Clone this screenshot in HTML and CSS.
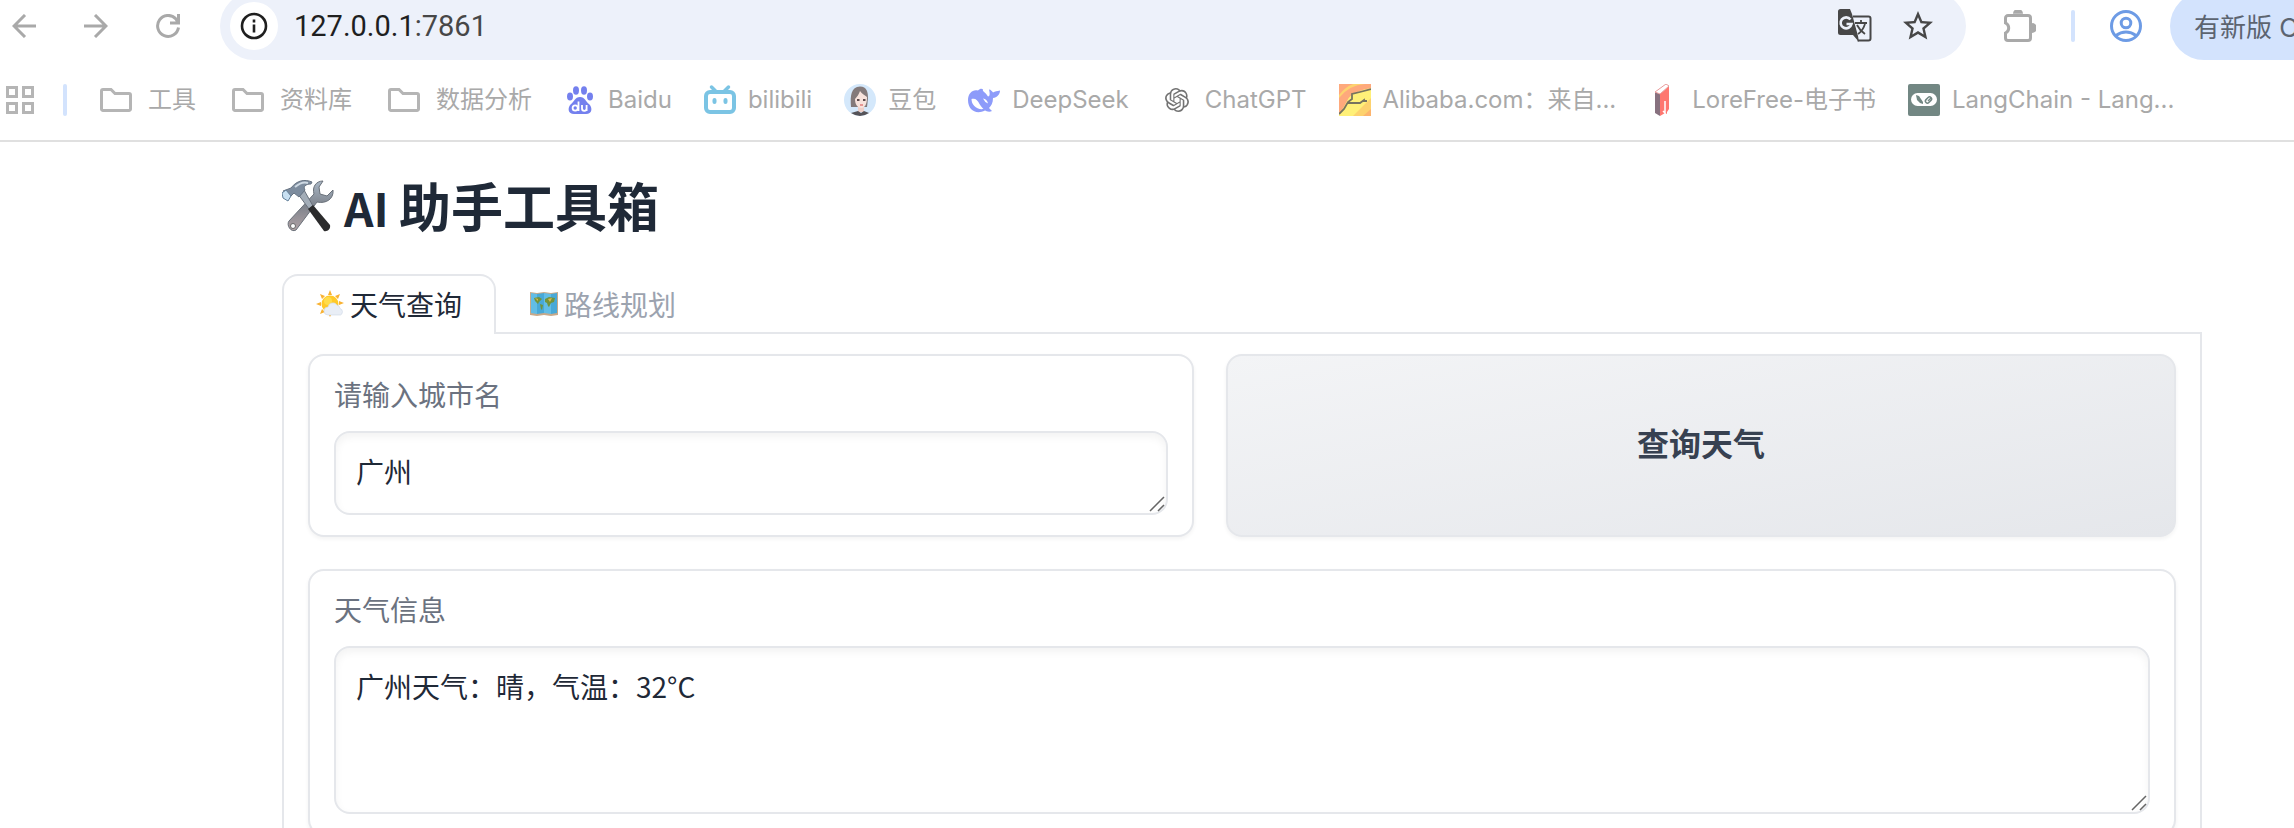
FILE: index.html
```html
<!DOCTYPE html>
<html lang="zh-CN">
<head>
<meta charset="utf-8">
<title>AI 助手工具箱</title>
<link rel="stylesheet" href="styles.css">
</head>
<body>
<header class="browser">
  <div class="toolbar">
    <nav class="nav-buttons" aria-label="导航">
      <button class="icon-btn" aria-label="后退"><svg width="24" height="24" viewBox="0 0 24 24" fill="none" stroke="#a9a9a9" stroke-width="3"><path d="M24 12H2M13 1L2 12l11 11"/></svg></button>
      <button class="icon-btn" aria-label="前进"><svg width="24" height="24" viewBox="0 0 24 24" fill="none" stroke="#a9a9a9" stroke-width="3"><path d="M0 12h22M11 1l11 11-11 11"/></svg></button>
      <button class="icon-btn" aria-label="重新加载"><svg width="24" height="24" viewBox="0 0 24 24" fill="none" stroke="#a9a9a9" stroke-width="3"><path d="M22.500 13.500A10.500 10.500 0 1 1 20 5l2 3.500M14 9h8.500V0"/></svg></button>
    </nav>
    <div class="omnibox">
      <button class="site-info" aria-label="网站信息"><svg width="28" height="28" viewBox="0 0 28 28" fill="none" stroke="#1f1f1f" stroke-width="2.600"><circle cx="14" cy="14" r="12"/><path d="M14 12.500v8M14 7.500v3"/></svg></button>
      <div class="url">127.0.0.1<span class="port">:7861</span></div>
      <button class="icon-btn" aria-label="翻译"><svg width="34" height="34" viewBox="0 0 34 34"><path d="M15 7.500h15.500a2 2 0 0 1 2 2v20a2 2 0 0 1-2 2H19.500" fill="none" stroke="#474747" stroke-width="2"/><path d="M2.500 0H12l2 5 6 22 1 6-6-7H2.500A2.500 2.500 0 0 1 0 23.500v-21A2.500 2.500 0 0 1 2.500 0z" fill="#474747"/><path d="M12.500 10.500A5.500 5.500 0 1 0 13.500 15H8.500" fill="none" stroke="#edf1fa" stroke-width="2.600"/><path d="M17 14h12M23 11v3M19 16c2 4 5 7 8 9M27 15c-2 6-4 8-7 10" fill="none" stroke="#474747" stroke-width="1.800"/></svg></button>
      <button class="icon-btn" aria-label="为此标签页添加书签"><svg width="36" height="36" viewBox="0 0 24 24" fill="#474747"><path d="M22 9.240l-7.190-.62L12 2 9.190 8.630 2 9.240l5.460 4.730L5.820 21 12 17.270 18.180 21l-1.630-7.030L22 9.240zM12 15.400l-3.760 2.270 1-4.280-3.320-2.880 4.380-.38L12 6.100l1.710 4.040 4.380.38-3.320 2.880 1 4.280L12 15.400z"/></svg></button>
    </div>
    <div class="actions">
      <button class="icon-btn" aria-label="扩展程序"><svg width="32" height="32" viewBox="0 0 32 32"><path d="M9 3.800a5 5 0 0 1 10 0zM28 13a5 5 0 0 1 0 10z" fill="#a9a9a9"/><path d="M4 5.500h20a2.500 2.500 0 0 1 2.500 2.500v20a2.500 2.500 0 0 1-2.500 2.500H4A2.500 2.500 0 0 1 1.500 28v-5a5.500 5.500 0 0 0 0-10V8A2.500 2.500 0 0 1 4 5.500z" fill="none" stroke="#a9a9a9" stroke-width="3"/></svg></button>
      <span class="divider"></span>
      <button class="icon-btn" aria-label="个人资料"><svg width="32" height="32" viewBox="0 0 32 32" fill="none" stroke="#6d9be5" stroke-width="3"><circle cx="16" cy="16" r="14.500"/><circle cx="16" cy="13" r="4.800"/><path d="M6 25.500c6-4.700 14-4.700 20 0"/></svg></button>
    </div>
    <button class="update">有新版 C</button>
  </div>
  <nav class="bookmarks" aria-label="书签">
    <button class="icon-btn" aria-label="应用"><svg width="28" height="28" viewBox="0 0 28 28" fill="none" stroke="#b5b5b5" stroke-width="3"><path d="M1.500 1.500h9v9h-9zM17.500 1.500h9v9h-9zM1.500 17.500h9v9h-9zM17.500 17.500h9v9h-9z"/></svg></button>
    <span class="divider"></span>
    <div class="links">
      <button class="bookmark"><svg width="40" height="32" viewBox="0 0 40 32" fill="none" stroke="#b5b5b5" stroke-width="3"><path d="M7 5.500h8l4 4h14a1.500 1.500 0 0 1 1.500 1.500v14a1.500 1.500 0 0 1-1.500 1.500H7A1.500 1.500 0 0 1 5.500 25V7A1.500 1.500 0 0 1 7 5.500z"/></svg>工具</button>
      <button class="bookmark"><svg width="40" height="32" viewBox="0 0 40 32" fill="none" stroke="#b5b5b5" stroke-width="3"><path d="M7 5.500h8l4 4h14a1.500 1.500 0 0 1 1.500 1.500v14a1.500 1.500 0 0 1-1.500 1.500H7A1.500 1.500 0 0 1 5.500 25V7A1.500 1.500 0 0 1 7 5.500z"/></svg>资料库</button>
      <button class="bookmark"><svg width="40" height="32" viewBox="0 0 40 32" fill="none" stroke="#b5b5b5" stroke-width="3"><path d="M7 5.500h8l4 4h14a1.500 1.500 0 0 1 1.500 1.500v14a1.500 1.500 0 0 1-1.500 1.500H7A1.500 1.500 0 0 1 5.500 25V7A1.500 1.500 0 0 1 7 5.500z"/></svg>数据分析</button>
      <a class="bookmark" href="#"><svg width="32" height="32" viewBox="0 0 32 32"><g fill="#7480ee"><ellipse cx="6" cy="12.500" rx="3" ry="4"/><ellipse cx="12" cy="6.500" rx="3" ry="4.200"/><ellipse cx="20" cy="6.500" rx="3" ry="4.200"/><ellipse cx="26" cy="12.500" rx="3" ry="4"/><path d="M16 13c5 0 6 5 9 7 4 4 3 10-3 10H10c-6 0-7-6-3-10 3-2 4-7 9-7z"/></g><g fill="none" stroke="#fff" stroke-width="1.800"><circle cx="11.200" cy="24" r="2.600"/><path d="M14.500 17.500V27M18 21v3.500q0 2.300 2.300 2.300t2.300-2.300V21V27"/></g></svg>Baidu</a>
      <a class="bookmark" href="#"><svg width="32" height="32" viewBox="0 0 32 32" fill="none" stroke="#7bc4e4" stroke-width="4" stroke-linecap="round"><rect x="2" y="8" width="28" height="20" rx="4"/><path d="M7.500 3l4 4M24.500 3l-4 4" stroke-width="3.500"/><path d="M10.500 16v2M21.500 16v2"/></svg>bilibili</a>
      <a class="bookmark" href="#"><svg width="32" height="32" viewBox="0 0 32 32"><circle cx="16" cy="16" r="16" fill="#d4e8fb"/><path d="M7 23C6 12 7 3 16 2.500c7 0 8 6 8 12L23 23z" fill="#83797a"/><path d="M14 22h6v6h-6z" fill="#eed0c9"/><path d="M11 15c2-2 4-5 5-8 2 3 5 4 7 6 0 7-2 11-5.500 11S11 21 11 15z" fill="#f7e2dc"/><path d="M7 29l7-2 3 2 3-2 5 2q-9 6-18 0z" fill="#555358"/><path d="M13 16h2.500M19 16h2.500" stroke="#5c4a4c" stroke-width="1.800"/><path d="M16 21h3" stroke="#e07c7c" stroke-width="1.500"/></svg>豆包</a>
      <a class="bookmark" href="#"><svg width="32" height="32" viewBox="0 0 32 32"><path d="M0 16C0 9 5 5 10 6.500c2-2 4-2 5-1-1 2 3 3 5 7 2 0 2-3 1-7 2 0 3 2 4 3 2-1.500 4-1 7-2 0 4-3 7-7 7.500 0 5-2 8-4 10l3 3c-3 1.500-6 0-7-.500C8 31 0 26 0 16z" fill="#8d9bfa"/><path d="M3.500 15c4-1 6 1 8 5 2 3 3 4 4 5-7 1-12-4-12-10zM15 14.500q4 .5 5 5-3.500-1.500-5-5z" fill="#fff"/></svg>DeepSeek</a>
      <a class="bookmark" href="#"><svg width="32" height="32" viewBox="0 0 32 32"><g transform="translate(4 4)" fill="#737373"><path d="M22.280 9.820a5.980 5.980 0 0 0-.52-4.910 6.050 6.050 0 0 0-6.510-2.900A6.070 6.070 0 0 0 4.980 4.180a5.980 5.980 0 0 0-4 2.900 6.050 6.050 0 0 0 .74 7.100 5.980 5.980 0 0 0 .51 4.910 6.050 6.050 0 0 0 6.520 2.900A5.980 5.980 0 0 0 13.260 24a6.060 6.060 0 0 0 5.770-4.210 5.990 5.990 0 0 0 4-2.900 6.060 6.060 0 0 0-.75-7.070zm-9.020 12.610a4.480 4.480 0 0 1-2.880-1.040l.14-.08 4.780-2.760a.79.79 0 0 0 .39-.68v-6.740l2.020 1.170.04.050v5.580a4.500 4.500 0 0 1-4.490 4.500zM3.600 18.300a4.470 4.470 0 0 1-.54-3.010l.14.090 4.780 2.760a.77.77 0 0 0 .78 0l5.840-3.370v2.330l-.03.060L9.740 19.950A4.500 4.500 0 0 1 3.600 18.300zM2.340 7.900a4.490 4.490 0 0 1 2.370-1.980v5.680a.77.77 0 0 0 .39.680l5.810 3.350-2.020 1.170h-.07l-4.830-2.790A4.500 4.500 0 0 1 2.340 7.870zm16.600 3.860L13.100 8.360l2.020-1.160h.07l4.830 2.790a4.490 4.490 0 0 1-.68 8.100v-5.680a.79.79 0 0 0-.4-.65zm2.010-3.030-.14-.09-4.770-2.780a.78.78 0 0 0-.79 0L9.410 9.230V6.900l.03-.06 4.830-2.790a4.500 4.500 0 0 1 6.680 4.660zM8.310 12.860 6.290 11.700l-.04-.06V6.070a4.500 4.500 0 0 1 7.380-3.450l-.14.080L8.700 5.460a.79.79 0 0 0-.39.680zm1.100-2.360L12 9l2.610 1.500v3L12.010 15l-2.600-1.500z"/></g></svg>ChatGPT</a>
      <a class="bookmark" href="#"><svg width="32" height="32" viewBox="0 0 32 32"><path d="M0 0h32v32H0z" fill="#fea97c"/><path d="M0 14Q10 1 26 0H14Q6 3 0 11z" fill="#fdd36f"/><path d="M0 30C8 20 8 12 16 9q8-4 16-5v28H0z" fill="#fff078"/><path d="M32 14v18H14z" fill="#fdd26e"/><path d="M32 25v7h-8z" fill="#fdb46d"/><path d="M0 30l5-5 4-7 4-3V10l8-2 11-3M8 19h13l4-3v1h3" fill="none" stroke="#77735f" stroke-width="1.800"/></svg>Alibaba.com：来自...</a>
      <a class="bookmark" href="#"><svg width="32" height="32" viewBox="0 0 32 32"><path d="M7 8l5 2v22l-5-3z" fill="#87717f"/><path d="M12 10l9-8v23l-2 3v2l-2-1-5 3z" fill="#fe7770"/><path d="M7 8L18 0l3 2-9 8z" fill="#fff" stroke="#e89b9b"/><path d="M17 17v12l-2-2" fill="none" stroke="#fff" stroke-width="1.500"/></svg>LoreFree-电子书</a>
      <a class="bookmark" href="#"><svg width="32" height="32" viewBox="0 0 32 32"><rect width="32" height="32" rx="2" fill="#728783"/><rect x="3" y="9" width="26" height="13" rx="6.500" fill="#fff"/><path d="M8 11l3 1 4 6v2l-3-1-3-3z" fill="#728783"/><g fill="none" stroke="#728783" stroke-width="1.500"><rect x="17" y="14" width="7" height="4" rx="2" transform="rotate(-45 20.500 16)"/><path d="M20 17l3-3"/></g></svg>LangChain - Lang...</a>
    </div>
  </nav>
</header>
<main class="page">
  <h1 class="title">
    <svg class="title-icon" width="52" height="52" viewBox="0 0 52 52" aria-hidden="true">
      <defs><linearGradient id="steel" x1="0" y1="0" x2="0" y2="1"><stop offset="0" stop-color="#a9b7c6"/><stop offset=".5" stop-color="#7e838c"/><stop offset="1" stop-color="#b1a2a5"/></linearGradient></defs>
      <path d="M41 1c-7 0-11 6-9 13L7 41c-3 4 2 12 7 9l21-28c9 2 17-3 16-12l-6 6-7-2-1-7z" fill="url(#steel)" stroke="#697079"/>
      <circle cx="11" cy="46" r="2.500" fill="#fff" stroke="#666"/>
      <path d="M16 14l6-4 9 16-4 3z" fill="#a3adb8" stroke="#69717c"/>
      <path d="M26 29l5-4 17 20c1 4-3 7-6 6z" fill="#2b2b2c"/>
      <path d="M9 8C15 0 23-1 30 2l-1 2c-6 0-8 3-6 6l-6 7-5-4-5 5-6-7z" fill="#7d8c9e" stroke="#677382"/>
      <path d="M0 13l4-3 5 6-3 5-5-3z" fill="#c8e0f2" stroke="#63809a"/>
      <path d="M13 7q7-6 13-4" fill="none" stroke="#ced9e3" stroke-width="2"/>
    </svg>
    <span class="title-text"><span class="latin">AI </span>助手工具箱</span>
  </h1>
  <div class="tabs" role="tablist">
    <button class="tab selected" role="tab" aria-selected="true">
      <svg width="28" height="28" viewBox="0 0 28 28" aria-hidden="true"><path d="M14 0l2 5h-4zM4 4l5 2-3 3zM24 4l-2 5-3-3zM0 14l5-2v4zM28 13l-5 2v-4zM4 24l2-5 3 3zM14 27l-2-4h4z" fill="#f9b233"/><circle cx="14" cy="14" r="8.500" fill="#ffc928"/><circle cx="12" cy="11" r="4" fill="#ffdc4a"/><path d="M12 25a4 4 0 0 1 0-8 5 5 0 0 1 9-2 4 4 0 0 1 3 3.500A3.500 3.500 0 0 1 24.500 25z" fill="#e9eef6" stroke="#ccd6e5" stroke-width=".6"/></svg>
      天气查询
    </button>
    <button class="tab" role="tab" aria-selected="false">
      <svg width="28" height="28" viewBox="0 0 28 28" aria-hidden="true"><path d="M0 2l7 1 7-1 7 1 7-1v23l-7 1-7-1-7 1-7-1z" fill="#c7a98a"/><path d="M1 3l6 1v20l-6-1zM14 3l7 1v20l-7-1z" fill="#62bde6"/><path d="M7 4l7-1v20l-7 1zM21 4l6-1v20l-6 1z" fill="#48a9d8"/><path d="M4 8l5-1 3 2-3 3-1 2-3-3zM10 14l3 1-1 5-1-1zM15 9l4-2 6 1-1 4-3 1-2 4-1-1-1-3-2-1z" fill="#71943d"/><path d="M5 8l3 1v2zM18 9l4-1-2 4z" fill="#dbb84f"/></svg>
      路线规划
    </button>
  </div>
  <section class="panel" role="tabpanel">
    <div class="query-row">
      <div class="block">
        <label class="label" for="city">请输入城市名</label>
        <div class="field">
          <textarea class="textbox" id="city" rows="1">广州</textarea>
          <svg class="grip" width="16" height="16" viewBox="0 0 16 16" fill="none" stroke="#666" stroke-width="1.500" aria-hidden="true"><path d="M1 15L15 1M9 15l6-6"/></svg>
        </div>
      </div>
      <button class="submit">查询天气</button>
    </div>
    <div class="block">
      <label class="label" for="weather">天气信息</label>
      <div class="field">
        <textarea class="textbox" id="weather" rows="3" readonly>广州天气：晴，气温：32°C</textarea>
        <svg class="grip" width="16" height="16" viewBox="0 0 16 16" fill="none" stroke="#666" stroke-width="1.500" aria-hidden="true"><path d="M1 15L15 1M9 15l6-6"/></svg>
      </div>
    </div>
  </section>
</main>
</body>
</html>
```

FILE: styles.css
```css
* { box-sizing: border-box; }

html { height: 100%; overflow: hidden; }

body {
  margin: 0;
  height: 100%;
  overflow: hidden;
  background: #fff;
  color: #1f2937;
  font-family: "Noto Sans CJK SC", sans-serif;
}

button, textarea { font: inherit; color: inherit; }
button { border: 0; padding: 0; background: none; cursor: pointer; }
svg { display: block; flex: none; }

/* Browser chrome */
.browser {
  border-bottom: 2px solid #e0e0e0;
  font-family: Inter, "Noto Sans CJK SC", sans-serif;
}

.toolbar {
  display: flex;
  align-items: center;
  height: 68px;
  margin-top: -8px;
  padding-left: 12px;
}

.icon-btn { display: flex; flex: none; }

.nav-buttons { display: flex; gap: 48px; margin-right: 40px; }

.omnibox {
  flex: 1;
  display: flex;
  align-items: center;
  gap: 28px;
  height: 68px;
  padding: 0 30px 0 10px;
  border-radius: 34px;
  background: #edf1fa;
}

.site-info {
  display: flex;
  align-items: center;
  justify-content: center;
  width: 48px;
  height: 48px;
  border-radius: 50%;
  background: #fff;
}

.url {
  flex: 1;
  margin-left: -12px;
  font-family: Roboto, sans-serif;
  font-size: 29px;
  line-height: 36px;
  color: #1f1f1f;
}

.port { color: #474747; }

.actions { display: flex; align-items: center; gap: 35px; margin: 0 28px 0 38px; }

.divider { flex: none; width: 4px; height: 32px; border-radius: 2px; background: #d3e3fd; }

.update {
  flex: none;
  width: 124px;
  height: 68px;
  padding: 0 0 2px 24px;
  border-radius: 34px 0 0 34px;
  background: #d3e3fd;
  color: #5c6470;
  font-size: 26px;
  text-align: left;
  white-space: nowrap;
  overflow: hidden;
}

.bookmarks { display: flex; align-items: center; height: 80px; padding-left: 6px; gap: 29px; }

.links { display: flex; gap: 32px; }

.bookmark {
  display: flex;
  align-items: center;
  gap: 12px;
  color: #a9a9a9;
  font-size: 24px;
  line-height: 32px;
  text-decoration: none;
  white-space: nowrap;
}

/* Application */
.page { padding: 30px 92px 0 282px; }

.title {
  display: flex;
  align-items: center;
  gap: 10px;
  height: 68px;
  margin: 0 0 34px;
  font-size: 52px;
  line-height: 68px;
  font-weight: 700;
}

.title-text { padding-bottom: 3px; }

.latin { font-size: 46px; line-height: 1; white-space: pre; }

.tabs { display: flex; border-bottom: 2px solid #e5e7eb; }

.tab {
  display: flex;
  align-items: center;
  gap: 6px;
  height: 60px;
  margin-bottom: -2px;
  padding: 0 32px 2px;
  border: 2px solid transparent;
  border-bottom: 0;
  border-radius: 16px 16px 0 0;
  color: #9ca3af;
  font-size: 28px;
}

.tab.selected { border-color: #e5e7eb; background: #fff; color: #1f2937; }

.panel {
  display: flex;
  flex-direction: column;
  gap: 32px;
  padding: 20px 24px;
  border: 2px solid #e5e7eb;
  border-top: 0;
}

.query-row { display: grid; grid-template-columns: 443fr 475fr; gap: 32px; }

.block {
  padding: 19px 24px 20px;
  border: 2px solid #e5e7eb;
  border-radius: 16px;
  background: #fff;
  box-shadow: 0 2px 4px rgba(0, 0, 0, 0.05);
}

.label {
  display: block;
  margin-bottom: 17px;
  color: #6b7280;
  font-size: 28px;
  line-height: 39px;
}

.field { position: relative; }

.textbox {
  display: block;
  width: 100%;
  padding: 17px 20px 21px;
  border: 2px solid #e5e7eb;
  border-radius: 16px;
  outline: 0;
  background: #fff;
  box-shadow: inset 0 4px 8px rgba(0, 0, 0, 0.05);
  font-size: 28px;
  line-height: 42px;
  resize: none;
  overflow: hidden;
}

.grip { position: absolute; right: 3px; bottom: 3px; }

.submit {
  padding-bottom: 8px;
  border: 2px solid #e5e7eb;
  border-radius: 16px;
  background: linear-gradient(to bottom right, #f3f4f6, #e5e7eb);
  box-shadow: 0 2px 4px rgba(0, 0, 0, 0.05);
  color: #374151;
  font-size: 32px;
  font-weight: 700;
}
```
